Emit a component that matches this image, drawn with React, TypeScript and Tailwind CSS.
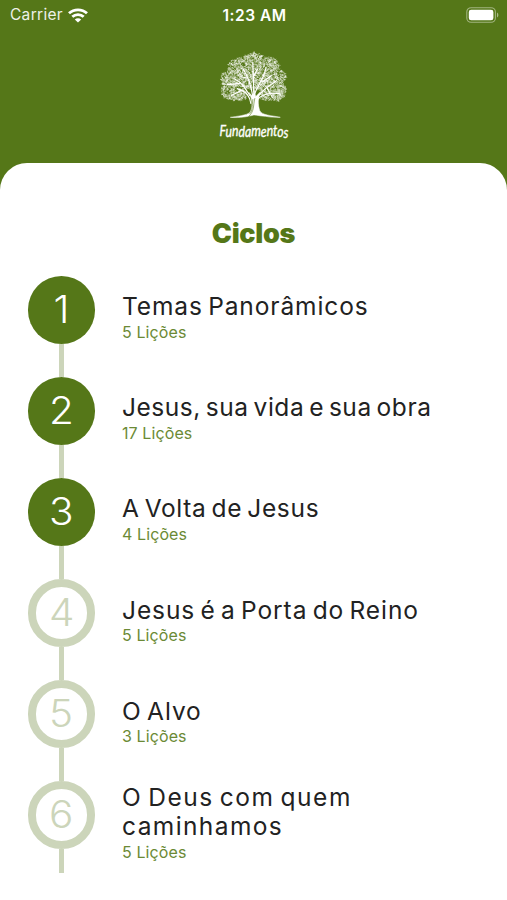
import React from "react";

type Cycle = { n: number; lines: { text: string; spacing: string }[]; lessons: string; open: boolean };

const cycles: Cycle[] = [
  { n: 1, lines: [{ text: "Temas Panorâmicos", spacing: "tracking-[0.9px]" }], lessons: "5 Lições", open: true },
  { n: 2, lines: [{ text: "Jesus, sua vida e sua obra", spacing: "tracking-[0.54px]" }], lessons: "17 Lições", open: true },
  { n: 3, lines: [{ text: "A Volta de Jesus", spacing: "tracking-[0.67px]" }], lessons: "4 Lições", open: true },
  { n: 4, lines: [{ text: "Jesus é a Porta do Reino", spacing: "tracking-[0.92px]" }], lessons: "5 Lições", open: false },
  { n: 5, lines: [{ text: "O Alvo", spacing: "tracking-[0.95px]" }], lessons: "3 Lições", open: false },
  {
    n: 6,
    lines: [
      { text: "O Deus com quem", spacing: "tracking-[1.55px]" },
      { text: "caminhamos", spacing: "tracking-[1.4px]" },
    ],
    lessons: "5 Lições",
    open: false,
  },
];

// Overlapping lobes that give the crown its rounded, uneven outline.
const lobes = [
  [35, 13, 13, 11], [20, 17, 11, 10], [49, 16, 12, 10], [12, 29, 10, 10], [58, 28, 10, 11],
  [11, 40, 9, 9], [59, 40, 9, 10], [20, 44, 11, 6], [50, 44, 12, 6], [35, 26, 20, 14],
];

function crownLeaves(): string {
  let seed = 7;
  const rnd = () => {
    seed = (seed * 16807) % 2147483647;
    return seed / 2147483647;
  };
  let d = "";
  for (let i = 0; i < 2700; i++) {
    const x = 1 + rnd() * 68;
    const y = 2 + rnd() * 50;
    const a = rnd() * Math.PI * 2;
    const inside = lobes.some(([cx, cy, rx, ry]) => ((x - cx) / rx) ** 2 + ((y - cy) / ry) ** 2 < 1);
    if (!inside) continue;
    if (Math.abs(x - 35) < 7 && y > 39) continue;
    d += `M${x.toFixed(1)} ${y.toFixed(1)}l${(Math.cos(a) * 1.3).toFixed(1)} ${(Math.sin(a) * 1.3).toFixed(1)}`;
  }
  return d;
}

const leaves = crownLeaves();

function Logo() {
  return (
    <svg width="76" height="92" viewBox="0 0 76 92" fill="none" stroke="white" strokeLinecap="round">
      <g transform="translate(3.5 1) scale(0.98 0.99)">
        <path d={leaves} strokeWidth="0.6" opacity="0.72" />
        <path d="M32 53C31 46 28 41 18 38M31 45C25 36 22 31 15 28M34 46C32 33 28 24 24 18M35 41L34 12M36 43C39 34 45 29 47 18M38 48C42 40 50 36 58 30M38 50C43 43 52 42 61 43M22 40L12 45M20 33L8 34M27 27L21 26M44 31L53 25M49 38L54 47M34 27L39 18" strokeWidth="1.2" />
        <path d="M30 42C34 49 34 58 31 62C28 65 17 66 11 67C21 68 29 66 34 65C36 64 42 66 47 66C52 67 57 67 62 67C53 65 43 65 41 60C39 54 39 48 42 41L37 46L35 38L34 46Z" fill="white" strokeWidth="0.5" />
        <path d="M36 48C34 56 36 60 30 66M34 49C33 57 34 60 31 63" stroke="#557718" strokeWidth="0.6" />
      </g>
      <text
        x="3.5"
        y="86"
        dy="0 1 -1 0.6 0.5 -1 0.8 -0.8 0 1 0.5"
        textLength="69"
        lengthAdjust="spacingAndGlyphs"
        fill="white"
        strokeWidth="0.35"
        fontSize="15.5"
        fontStyle="italic"
        fontFamily="Lato, sans-serif"
      >
        Fundamentos
      </text>
    </svg>
  );
}

function StatusBar() {
  return (
    <div className="grid h-[30px] grid-cols-3 items-center pl-[10px] pr-[8px] text-[15.5px] text-white">
      <div className="flex items-center gap-[5px]">
        <span className="tracking-[0.3px] opacity-90">Carrier</span>
        <svg width="20" height="15" viewBox="0 0 20 15" fill="none" stroke="white" strokeWidth="2.8">
          <path d="M1 5.3C6 .6 14 .6 19 5.3M4.3 8.8C7.5 5.8 12.5 5.8 15.7 8.8" />
          <path d="M10 14.5L6.8 11.4C8.5 9.8 11.5 9.8 13.2 11.4Z" fill="white" stroke="none" />
        </svg>
      </div>
      <span className="whitespace-nowrap pt-px text-center text-[15.5px] font-semibold tracking-[0.5px]">1:23 AM</span>
      <div className="flex justify-end">
        <svg width="33" height="16" viewBox="0 0 33 16" fill="none">
          <rect x="0.8" y="0.7" width="28.6" height="14.6" rx="4.3" stroke="white" strokeOpacity="0.45" strokeWidth="1.1" />
          <rect x="2.8" y="2.7" width="24.6" height="10.6" rx="2.4" fill="white" />
          <path d="M31 5.5C32.8 6.3 32.8 9.7 31 10.5Z" fill="white" fillOpacity="0.5" />
        </svg>
      </div>
    </div>
  );
}

function Step({ cycle, last }: { cycle: Cycle; last: boolean }) {
  return (
    <li className={last ? "flex h-[91.5px]" : "flex h-[101.1px]"}>
      <div className="flex w-[68px] shrink-0 flex-col items-center">
        <div
          className={
            cycle.open
              ? "flex size-[67.5px] shrink-0 items-center justify-center rounded-full bg-[#557718] text-white"
              : "flex size-[67.5px] shrink-0 items-center justify-center rounded-full border-8 border-[#ccd5ba] text-[#ccd5ba]"
          }
        >
          <span className="scale-x-108 text-[37.5px] font-light leading-none">{cycle.n}</span>
        </div>
        <div className="w-[5px] flex-1 bg-[#ccd5ba]" />
      </div>
      <div className="ml-[26.5px] mt-[7.5px] flex h-[67px] flex-col justify-center whitespace-nowrap">
        {cycle.lines.map((line) => (
          <div key={line.text} className="h-[29.5px] text-[24.5px] leading-[29.5px] text-[#222222] [word-spacing:-2.5px]">
            <span className={line.spacing}>{line.text}</span>
          </div>
        ))}
        <div className="h-5 text-[16px] leading-5 tracking-[0.1px] text-[#6b8a35]">{cycle.lessons}</div>
      </div>
    </li>
  );
}

export default function App() {
  return (
    <div className="h-[900px] w-[507px] overflow-hidden bg-[#557718] font-[Inter,sans-serif]">
      <StatusBar />
      <header className="flex h-[132.5px] justify-center pt-5">
        <Logo />
      </header>
      <main className="h-[738px] rounded-t-[27px] bg-white pt-[54px]">
        <h1 className="text-center text-[27px] font-black leading-[34px] tracking-[-0.3px] text-[#557718]">Ciclos</h1>
        <ol className="mt-[25.5px] pl-[27.5px]">
          {cycles.map((cycle, i) => (
            <Step key={cycle.n} cycle={cycle} last={i === cycles.length - 1} />
          ))}
        </ol>
      </main>
    </div>
  );
}
